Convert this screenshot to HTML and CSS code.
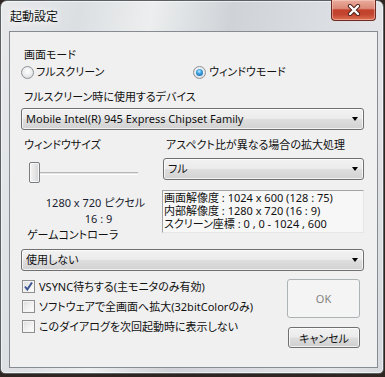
FILE: index.html
```html
<!DOCTYPE html>
<html lang="ja">
<head>
    <meta charset="UTF-8">
    <title>起動設定</title>
    <link rel="stylesheet" href="styles.css">
</head>
<body>
    <div class="window">
        <div class="titlebar">
            <span class="title">起動設定</span>
            <span class="close">
                <svg width="14" height="12" viewBox="0 0 14 12">
                    <path d="M3 2 L11 10 M11 2 L3 10" stroke="#4a1f18" stroke-width="4.2" stroke-linecap="round"/>
                    <path d="M3 2 L11 10 M11 2 L3 10" stroke="#ffffff" stroke-width="2.4" stroke-linecap="round"/>
                </svg>
            </span>
        </div>
        <div class="client">
            <div class="label first">画面モード</div>
            <div class="radios">
                <div class="radio"><span class="rb"></span>フルスクリーン</div>
                <div class="radio"><span class="rb on"></span>ウィンドウモード</div>
            </div>
            <div class="label device">フルスクリーン時に使用するデバイス</div>
            <div class="combo">Mobile Intel(R) 945 Express Chipset Family<span class="arrow"></span></div>

            <div class="split">
                <div class="left">
                    <div class="label">ウィンドウサイズ</div>
                    <div class="slider"><span class="thumb"></span><span class="track"></span></div>
                    <div class="size">1280 x 720 ピクセル</div>
                    <div class="ratio">16 : 9</div>
                    <div class="label pad">ゲームコントローラ</div>
                </div>
                <div class="right">
                    <div class="label">アスペクト比が異なる場合の拡大処理</div>
                    <div class="combo short">フル<span class="arrow"></span></div>
                    <div class="info">
                        <div>画面解像度 : 1024 x 600 (128 : 75)</div>
                        <div>内部解像度 : 1280 x 720 (16 : 9)</div>
                        <div>スクリーン座標 : 0 , 0 - 1024 , 600</div>
                    </div>
                </div>
            </div>

            <div class="combo pad-controller">使用しない<span class="arrow"></span></div>

            <div class="bottom">
                <div class="checks">
                    <div class="check"><span class="cb on">
                        <svg width="11" height="11" viewBox="0 0 11 11"><path d="M2 5.5 L4.3 8.5 L9 1.5" fill="none" stroke="#3d5592" stroke-width="2"/></svg>
                    </span>VSYNC待ちする(主モニタのみ有効)</div>
                    <div class="check"><span class="cb"></span>ソフトウェアで全画面へ拡大(32bitColorのみ)</div>
                    <div class="check"><span class="cb"></span>このダイアログを次回起動時に表示しない</div>
                </div>
                <div class="buttons">
                    <div class="btn ok">OK</div>
                    <div class="btn cancel">キャンセル</div>
                </div>
            </div>
        </div>
    </div>
</body>
</html>
```
FILE: styles.css
```css
body {
    margin: 0;
    width: 385px;
    height: 377px;
    background-color: #2f2622;
    font-family: "Noto Sans", "Noto Sans CJK JP", sans-serif;
    font-size: 11px;
    font-feature-settings: "palt";
    color: #111;
    overflow: hidden;
}
.window {
    width: 384px;
    height: 374px;
    box-sizing: border-box;
    border: 1px solid #5b6065;
    border-radius: 7px 7px 5px 5px;
    background: linear-gradient(100deg, #e7e9eb 0%, #dcdfe2 18%, #eceeef 34%, #cfd3d7 52%, #d9dce0 70%, #e3e5e8 88%, #d6d9dd 100%);
    box-shadow: inset 0 0 0 1px rgba(255,255,255,0.55);
    display: flex;
    flex-direction: column;
}
.titlebar {
    height: 30px;
    display: flex;
    justify-content: space-between;
    align-items: flex-start;
    padding-left: 9px;
}
.title {
    margin-top: 8px;
    line-height: 16px;
    font-size: 12px;
    text-shadow: 0 0 6px #fff, 0 0 10px #fff;
}
.close {
    width: 45px;
    height: 21px;
    margin-top: -1px;
    margin-right: 7px;
    box-sizing: border-box;
    border: 1px solid #6e2a20;
    border-top: none;
    border-radius: 0 0 4px 4px;
    background: linear-gradient(#e9ab9c 0%, #dc8a78 42%, #c2412c 50%, #c3452f 72%, #dc6f52 100%);
    box-shadow: inset 0 0 0 1px rgba(255,220,210,0.45);
    display: flex;
    align-items: center;
    justify-content: center;
}
.client {
    margin-left: 8px;
    width: 369px;
    height: 337px;
    box-sizing: border-box;
    border: 1px solid #878c92;
    background-color: #f0f0f0;
    padding: 15px 13px 0 11px;
}
.label {
    line-height: 16px;
    padding-left: 3px;
    white-space: nowrap;
}
.radios {
    display: grid;
    grid-template-columns: 172px 1fr;
    margin-top: 1px;
}
.radio {
    display: flex;
    align-items: center;
    height: 16px;
    line-height: 16px;
    gap: 2px;
}
.radio + .radio {
    gap: 3px;
}
.rb {
    width: 13px;
    height: 13px;
    box-sizing: border-box;
    border-radius: 50%;
    border: 1px solid #8d9196;
    background: radial-gradient(circle at 50% 40%, #ffffff 0%, #e9eaeb 55%, #cfd1d3 100%);
    display: flex;
    align-items: center;
    justify-content: center;
}
.rb.on::after {
    content: "";
    width: 7px;
    height: 7px;
    border-radius: 50%;
    background: radial-gradient(circle at 45% 35%, #bfe8ff 0%, #3aa0e0 40%, #0d5a9c 100%);
}
.label.device {
    margin-top: 9px;
}
.combo {
    height: 22px;
    box-sizing: border-box;
    margin-top: 3px;
    border: 1px solid #707070;
    border-radius: 3px;
    background: linear-gradient(#f2f2f2 0%, #ebebeb 48%, #dedede 52%, #d2d2d2 100%);
    box-shadow: inset 0 0 0 1px rgba(255,255,255,0.7);
    padding-left: 4px;
    line-height: 20px;
    display: flex;
    justify-content: space-between;
    align-items: center;
    padding-right: 5px;
    white-space: nowrap;
}
.arrow {
    width: 0;
    height: 0;
    border-left: 3.5px solid transparent;
    border-right: 3.5px solid transparent;
    border-top: 4px solid #000;
}
.split {
    display: flex;
    margin-top: 7px;
}
.left {
    width: 141px;
}
.slider {
    display: flex;
    align-items: center;
    width: 109px;
    height: 21px;
    margin: 9px 0 0 8px;
}
.thumb {
    width: 11px;
    height: 21px;
    box-sizing: border-box;
    border: 1px solid #7a7d80;
    border-radius: 2px;
    background: linear-gradient(90deg, #f4f4f4 0%, #e6e6e6 50%, #d4d4d4 100%);
    box-shadow: inset 0 0 0 1px rgba(255,255,255,0.8);
}
.track {
    flex: 1;
    height: 3px;
    box-sizing: border-box;
    border-top: 1px solid #b6b8ba;
    border-bottom: 1px solid #ffffff;
    background-color: #e2e3e4;
    margin-top: 2px;
}
.size {
    margin-top: 12px;
    padding-left: 8px;
    line-height: 16px;
    text-align: center;
    color: #1a1d30;
}
.ratio {
    padding-left: 14px;
    line-height: 16px;
    text-align: center;
    color: #1a1d30;
}
.label.pad {
    padding-left: 6px;
}
.right {
    width: 202px;
}
.right .label {
    padding-left: 4px;
}
.combo.short {
    margin: 5px 0 0 1px;
}
.info {
    margin-top: 10px;
    height: 43px;
    box-sizing: border-box;
    border: 1px solid #e6e6e6;
    border-top-color: #a3a3a3;
    border-left-color: #a3a3a3;
    background-color: #f7f7f7;
    padding: 0 0 2px 1px;
    line-height: 13px;
    white-space: nowrap;
}
.combo.pad-controller {
    margin-top: 6px;
}
.bottom {
    display: flex;
    justify-content: space-between;
}
.checks {
    margin-top: 5px;
    padding-left: 1px;
}
.check {
    display: flex;
    align-items: center;
    height: 20px;
    gap: 4px;
    white-space: nowrap;
}
.cb {
    width: 13px;
    height: 13px;
    box-sizing: border-box;
    border: 1px solid #8e8f8f;
    background: linear-gradient(135deg, #dcdcdc 0%, #f4f4f4 60%, #ffffff 100%);
    box-shadow: inset 0 0 0 1px #f4f4f4;
    display: flex;
    align-items: center;
    justify-content: center;
}
.buttons {
    width: 73px;
    margin: 8px 4px 0 0;
    display: flex;
    flex-direction: column;
    align-items: flex-end;
}
.btn {
    box-sizing: border-box;
    border-radius: 3px;
    display: flex;
    align-items: center;
    justify-content: center;
}
.ok {
    width: 73px;
    height: 39px;
    border: 1px solid #adb2b5;
    background-color: #f4f4f4;
    color: #838383;
}
.cancel {
    width: 72px;
    height: 21px;
    margin-top: 9px;
    border: 1px solid #707070;
    background: linear-gradient(#f2f2f2 0%, #ebebeb 48%, #dddddd 52%, #cfcfcf 100%);
    box-shadow: inset 0 0 0 1px rgba(255,255,255,0.7);
}
```
